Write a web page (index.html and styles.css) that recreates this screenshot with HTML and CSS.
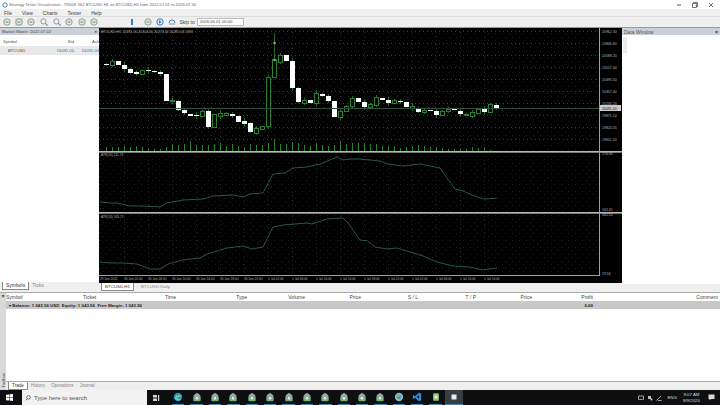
FILE: index.html
```html
<!DOCTYPE html>
<html lang="en">
<head>
    <meta charset="UTF-8">
    <meta name="viewport" content="width=device-width, initial-scale=1.0">
    <title>Strategy Tester Visualization</title>
    <link rel="stylesheet" href="styles.css">
</head>
<body>
    <svg class="defs" width="0" height="0">
        <symbol id="tool" viewBox="0 0 8 8">
            <circle cx="4" cy="4" r="3.2" fill="#e4e8e4" stroke="#7f9a86" stroke-width="0.9"/>
            <path d="M2.5 4h3" stroke="#5d7f68" stroke-width="0.9"/>
        </symbol>
        <symbol id="zoom" viewBox="0 0 8 8">
            <circle cx="3.4" cy="3.4" r="2.6" fill="#eef1f4" stroke="#8090a0" stroke-width="0.9"/>
            <path d="M5.3 5.3L7.6 7.6" stroke="#7a8a9a" stroke-width="1.1"/>
        </symbol>
        <symbol id="app" viewBox="0 0 12 12">
            <path d="M6 1l4 3v2H2V4z" fill="#9aa7a3"/>
            <path d="M1.5 6h9v3.5a1.5 1.5 0 0 1-1.5 1.5H3a1.5 1.5 0 0 1-1.5-1.5z" fill="#6fb07c"/>
            <circle cx="6" cy="7.5" r="1.6" fill="#e8f0ea"/>
        </symbol>
        <symbol id="edge" viewBox="0 0 12 12">
            <circle cx="6" cy="6" r="5" fill="#2b8fc4"/>
            <path d="M2 7c1-4 7-5 8-1H5c0 2 3 3 5 2-1 3-7 3-8-1z" fill="#6fd0a0"/>
        </symbol>
        <symbol id="globe" viewBox="0 0 12 12">
            <circle cx="6" cy="6" r="5" fill="#8fb4c8"/>
            <circle cx="6" cy="6" r="2.4" fill="#3f86b8"/>
            <path d="M3 2.5l5 1-2 3-4-1z" fill="#7fb07a"/>
        </symbol>
        <symbol id="code" viewBox="0 0 12 12">
            <path d="M8.5 1L11 2.2v7.6L8.5 11 3.5 6.9 1.6 8.4 1 8V4l.6-.4 1.9 1.5zM8.5 3.8L5.6 6l2.9 2.2z" fill="#2f8fe0"/>
        </symbol>
        <symbol id="leaf" viewBox="0 0 12 12">
            <rect x="2.5" y="1.5" width="7" height="9" rx="1" fill="#8fbf6f"/>
            <circle cx="6" cy="6" r="2" fill="#e6f0dc"/>
        </symbol>
        <symbol id="square" viewBox="0 0 12 12">
            <rect x="3" y="3" width="6" height="6" fill="#e4ecf4"/>
        </symbol>
    </svg>

    <div class="app">
        <div class="title-bar">
            <svg class="title-icon" width="6" height="6" viewBox="0 0 6 6"><circle cx="3" cy="3" r="2.2" fill="none" stroke="#3b7fc4" stroke-width="1"/></svg>
            <span class="title-text">Strategy Tester Visualization : TR008 V62 BTCUSD H1 on BTCUSD,H1 from 2022.07.01 to 2026.07.30</span>
            <div class="window-controls">
                <svg width="6" height="6" viewBox="0 0 6 6"><path d="M1 3h4" stroke="#555"/></svg>
                <svg width="6" height="6" viewBox="0 0 6 6"><path d="M.5 1.5h4v4h-4zM1.5 1.5v-1h4v4h-1" fill="none" stroke="#555" stroke-width=".8"/></svg>
                <svg width="6" height="6" viewBox="0 0 6 6"><path d="M1 1l4 4M5 1L1 5" stroke="#555" stroke-width=".8"/></svg>
            </div>
        </div>

        <div class="menu-bar">
            <span>File</span><span>View</span><span>Charts</span><span>Tester</span><span>Help</span>
        </div>

        <div class="toolbar">
            <div class="tool-group">
                <svg class="tool"><use href="#tool"/></svg>
                <svg class="tool tool-on"><use href="#tool"/></svg>
                <svg class="tool"><use href="#tool"/></svg>
            </div>
            <div class="tool-group tool-group-wide">
                <svg class="tool"><use href="#zoom"/></svg>
                <svg class="tool"><use href="#zoom"/></svg>
                <svg class="tool"><use href="#tool"/></svg>
                <svg class="tool"><use href="#tool"/></svg>
                <svg class="tool"><use href="#tool"/></svg>
            </div>
            <span class="speed-mark"></span>
            <div class="tool-group tool-group-play">
                <svg class="tool"><use href="#tool"/></svg>
                <svg class="tool tool-blue" viewBox="0 0 8 8"><circle cx="4" cy="4" r="3.2" fill="#dce8f6" stroke="#2f7dc8"/><path d="M3 2.2L5.6 4 3 5.8z" fill="#2f7dc8"/></svg>
                <svg class="tool" viewBox="0 0 8 8"><path d="M1 5a3 3 0 0 1 6 0" fill="none" stroke="#4a80b0"/><path d="M1 6h6" stroke="#8a9aa8"/></svg>
            </div>
            <span class="skip-label">Skip to</span>
            <span class="date-box">2026.05.01 00:00</span>
        </div>

        <div class="workspace">
            <div class="side-col">
                <div class="panel">
                    <div class="panel-head market-head"><span>Market Watch: 2022.07.02</span><span class="panel-close">×</span></div>
                    <div class="watch-row watch-head">
                        <span>Symbol</span><span class="num">Bid</span><span class="num">Ask</span>
                    </div>
                    <div class="watch-row watch-item">
                        <span class="sym">BTCUSD</span><span class="num">15031.00</span><span class="num">15031.00</span>
                    </div>
                </div>
                <div class="tabs side-tabs">
                    <span class="tab active">Symbols</span><span class="tab">Ticks</span>
                </div>
            </div>

            <div class="chart-col">
                <svg id="chart" class="chart" width="523" height="255" viewBox="99 28 523 255">
                    <defs>
                        <pattern id="dither" width="7" height="7" patternUnits="userSpaceOnUse">
                            <rect x="1" y="2" width="1" height="1" fill="#16221a"/>
                            <rect x="5" y="5" width="1" height="1" fill="#1c1c1c"/>
                        </pattern>
                    </defs>
                    <rect x="99" y="28" width="523" height="255" fill="#000"/>
                    <rect x="99" y="28" width="500" height="247" fill="url(#dither)"/>
                </svg>
                <div class="tabs chart-tabs">
                    <span class="tab active">BTCUSD,H1</span><span class="tab">BTCUSD,Daily</span>
                </div>
            </div>

            <div class="side-col data-col">
                <div class="panel">
                    <div class="panel-head"><span>Data Window</span><span class="panel-close">×</span></div>
                    <div class="data-grip"></div>
                </div>
                <div class="data-strip"></div>
            </div>
        </div>

        <div class="toolbox">
            <div class="toolbox-strip">
                <span class="strip-close">×</span>
                <span class="strip-label">Toolbox</span>
            </div>
            <div class="toolbox-main">
                <div class="trade-grid trade-head">
                    <span>Symbol</span><span>Ticket</span>
                    <span class="num">Time</span><span class="num">Type</span><span class="num">Volume</span>
                    <span class="num">Price</span><span class="num">S / L</span><span class="num">T / P</span>
                    <span class="num">Price</span><span class="num">Profit</span><span class="num">Comment</span>
                </div>
                <div class="trade-grid trade-balance">
                    <span class="balance-text">▾ Balance: 1 043.56 USD&nbsp; Equity: 1 043.56&nbsp; Free Margin: 1 043.56</span>
                    <span class="num">0.00</span>
                </div>
                <div class="trade-empty"></div>
                <div class="tabs toolbox-tabs">
                    <span class="tab active">Trade</span><span class="tab">History</span><span class="tab">Operations</span><span class="tab">Journal</span>
                </div>
            </div>
        </div>

        <div class="taskbar">
            <svg class="start" width="7" height="7" viewBox="0 0 7 7"><path d="M0 .8L3 .4v2.8H0zM3.5.3L7 0v3.2H3.5zM0 3.8h3v2.8L0 6.2zM3.5 3.8H7V7l-3.5-.4z" fill="#fff"/></svg>
            <div class="search-box">
                <svg width="6" height="6" viewBox="0 0 6 6"><circle cx="3.6" cy="2.4" r="1.8" fill="none" stroke="#444" stroke-width=".7"/><path d="M2.3 3.7L.6 5.4" stroke="#444" stroke-width=".7"/></svg>
                <span>Type here to search</span>
            </div>
            <svg class="task-view" width="7" height="6" viewBox="0 0 7 6"><path d="M0 0h4v2.4H0zM0 3.4h4V6H0zM5 0h1.2v6H5z" fill="#d8d8d8"/></svg>
            <div id="task-icons" class="task-icons"></div>
            <div class="tray">
                <svg width="6" height="6" viewBox="0 0 6 6"><path d="M.5 1h5v3.4h-5z" fill="none" stroke="#ddd" stroke-width=".7"/></svg>
                <svg width="6" height="6" viewBox="0 0 6 6"><path d="M1 1h3v3H1z" fill="#bbb"/><circle cx="4.5" cy="4.5" r="1" fill="#ddd"/></svg>
                <svg width="6" height="6" viewBox="0 0 6 6"><path d="M.5 5.5L5 1M2 5.5h3.5" stroke="#ccc" stroke-width=".8"/></svg>
                <span class="lang">ENG</span>
                <span class="clock"><span>9:07 AM</span><span>8/9/2020</span></span>
                <svg class="notes" width="7" height="7" viewBox="0 0 7 7"><path d="M.5.5h6v4.5H3L1.5 6.5V5h-1z" fill="#d8d8d8"/></svg>
            </div>
        </div>
    </div>

    <script src="chart.js"></script>
</body>
</html>
```

FILE: styles.css
```css
:root {
    --panel: #efefef;
    --line: #b9b9b9;
    --text: #444;
    --head: #c9d0da;
    --taskbar: #0d0f10;
}

* {
    box-sizing: border-box;
}

body {
    margin: 0;
    background: #fff;
    font-family: 'Liberation Sans', Arial, sans-serif;
    font-size: 5px;
    color: var(--text);
    overflow: hidden;
}

.defs {
    display: block;
    height: 0;
}

.app {
    width: 720px;
    height: 405px;
    display: flex;
    flex-direction: column;
}

.num {
    text-align: right;
}

/* window chrome */
.title-bar {
    height: 9px;
    display: flex;
    align-items: center;
    gap: 1px;
    padding-left: 2px;
    background: #fff;
    color: #666;
    font-size: 4.1px;
}

.window-controls {
    margin-left: auto;
    display: flex;
    gap: 10px;
    padding-right: 6px;
}

.menu-bar {
    height: 8px;
    display: flex;
    align-items: center;
    gap: 10px;
    padding-left: 4px;
    background: #f0f0f0;
    border-bottom: 1px solid #dcdcdc;
}

.toolbar {
    height: 11px;
    display: flex;
    align-items: center;
    padding-left: 3px;
    background: var(--panel);
    border-bottom: 1px solid #9a9a9a;
}

.tool-group {
    display: flex;
    gap: 4px;
}

.tool-group-wide {
    gap: 4.6px;
    margin-left: 5px;
}

.tool-group-play {
    margin-left: 11px;
}

.tool {
    width: 8px;
    height: 8px;
}

.tool-on {
    background: #d5dde5;
}

.speed-mark {
    width: 2px;
    height: 6px;
    margin-left: 33px;
    background: #2f7dc8;
}

.skip-label {
    margin-left: 3px;
}

.date-box {
    width: 47px;
    height: 8px;
    margin-left: 2px;
    padding-left: 2px;
    font-size: 4.2px;
    line-height: 6px;
    background: #fff;
    border: 1px solid #bbb;
}

/* main area */
.workspace {
    height: 264px;
    display: grid;
    grid-template-columns: 99px 523px 98px;
}

.side-col {
    display: flex;
    flex-direction: column;
    background: var(--panel);
}

.panel {
    flex: 1;
    background: #fff;
}

.panel-head {
    height: 7px;
    display: flex;
    justify-content: space-between;
    align-items: center;
    padding: 0 2px;
    background: var(--head);
}

.market-head {
    font-size: 4.2px;
}

.panel-close {
    font-weight: bold;
    color: #222;
}

.watch-row {
    height: 9px;
    display: grid;
    grid-template-columns: 50px 21px 25px;
    align-items: center;
    padding-left: 3px;
    font-size: 4.2px;
}

.watch-head {
    margin-top: 1px;
    height: 10px;
    color: #555;
}

.watch-item {
    background: #e9e9e9;
}

.watch-item .num {
    color: #2b6fc2;
}

.sym {
    padding-left: 5px;
}

.tabs {
    display: flex;
    align-items: flex-start;
    color: #888;
}

.tab {
    height: 8px;
    padding: 0 3px;
    line-height: 7px;
}

.tab.active {
    background: #fff;
    color: #333;
    border: 1px solid #888;
    border-top: none;
}

.side-tabs {
    height: 10px;
    padding-left: 2px;
}

.chart-col {
    display: flex;
    flex-direction: column;
    background: var(--panel);
}

.chart {
    display: block;
}

.chart-tabs {
    height: 9px;
    padding-left: 2px;
    gap: 4px;
    font-size: 4.4px;
}

.chart-text {
    font-family: 'Liberation Sans', Arial, sans-serif;
    font-size: 3.5px;
    fill: #b4b4b4;
}

.chart-time {
    font-size: 3.2px;
}

.data-col .panel-head span:first-child {
    color: #555;
}

.data-grip {
    width: 4px;
    height: 16px;
    margin: 2px 0 0 1px;
    background: #ececec;
}

.data-strip {
    height: 8px;
}

/* bottom toolbox */
.toolbox {
    flex: 1;
    display: flex;
    border-top: 1px solid #aaa;
}

.toolbox-strip {
    width: 6px;
    display: flex;
    flex-direction: column;
    justify-content: space-between;
    align-items: center;
    background: #d9d9d9;
}

.strip-close {
    font-weight: bold;
    color: #222;
}

.strip-label {
    writing-mode: vertical-rl;
    transform: rotate(180deg);
    padding-top: 3px;
    font-size: 4.2px;
}

.toolbox-main {
    flex: 1;
    display: flex;
    flex-direction: column;
}

.trade-grid {
    display: grid;
    grid-template-columns: 77px 40px 53px 71px 58px 56px 57px 58px 56px 61px 125px;
    align-items: center;
}

.trade-head {
    height: 8px;
    padding-left: 3px;
    margin-left: -3px;
}

.trade-balance {
    height: 8px;
    background: #c8c8c8;
    color: #222;
    font-weight: bold;
    font-size: 4.4px;
}

.balance-text {
    grid-column: 1 / span 9;
    padding-left: 3px;
}

.trade-empty {
    flex: 1;
    background: #fff;
}

.toolbox-tabs {
    height: 9px;
    background: var(--panel);
    border-top: 1px solid #aaa;
    padding-left: 2px;
    font-size: 4.6px;
}

/* windows taskbar */
.taskbar {
    height: 15px;
    display: flex;
    align-items: center;
    background: var(--taskbar);
    color: #d8d8d8;
}

.start {
    margin: 0 6px 0 6px;
}

.search-box {
    width: 125px;
    height: 15px;
    margin-left: 3px;
    display: flex;
    align-items: center;
    gap: 3px;
    padding-left: 3px;
    background: #f2f2f2;
    color: #555;
    font-size: 6px;
}

.task-view {
    margin-left: 6px;
}

.task-icons {
    height: 15px;
    display: flex;
    margin-left: 9px;
}

.task-icon {
    width: 12.4px;
    height: 15px;
    margin: 0 3px;
    display: flex;
    justify-content: center;
    align-items: center;
    border-bottom: 1px solid #3a8ac8;
}

.task-icon.current {
    width: 18.4px;
    margin: 0;
    background: #3a3d40;
}

.tray {
    margin-left: auto;
    display: flex;
    align-items: center;
    gap: 3px;
    padding-right: 5px;
}

.lang {
    margin-left: 2px;
    font-size: 4.4px;
}

.clock {
    display: flex;
    flex-direction: column;
    align-items: center;
    line-height: 6px;
    margin: 0 5px 0 3px;
    font-size: 4.4px;
}
```

FILE: chart.js
```js
const SVG_NS = 'http://www.w3.org/2000/svg';
const chart = document.getElementById('chart');

// top, bottom of each body and h = hollow (rising), w = solid white (falling)
const candles = [
    [64,65,'w'],[61,65,'h'],[61,65,'w'],[65,69,'w'],[69,73,'w'],[72,74,'w'],[70,74,'h'],[70,71,'w'],
    [71,72,'w'],[72,74,'w'],[74,101,'w'],[100,101,'h'],[101,110,'w'],[110,113,'w'],[114,116,'w'],[115,116,'w'],
    [111,116,'h'],[111,127,'w'],[114,127,'h'],[113,116,'h'],[113,115,'h'],[114,116,'w'],[116,122,'w'],[121,124,'w'],
    [123,132,'w'],[128,133,'h'],[126,129,'h'],[77,126,'h'],[59,77,'h'],[55,62,'h'],[55,61,'w'],[61,88,'w'],
    [88,102,'w'],[100,103,'h'],[100,103,'w'],[93,103,'h'],[94,96,'w'],[96,101,'w'],[101,117,'w'],[111,117,'h'],
    [106,111,'h'],[98,106,'h'],[98,102,'w'],[102,107,'w'],[104,107,'h'],[97,105,'h'],[98,100,'w'],[100,103,'w'],
    [100,103,'h'],[101,102,'w'],[102,107,'w'],[106,108,'h'],[108,112,'w'],[110,112,'h'],[110,111,'w'],[111,115,'w'],
    [111,115,'h'],[109,111,'h'],[109,110,'w'],[111,114,'w'],[114,115,'h'],[112,116,'h'],[109,113,'h'],[109,112,'w'],
    [104,112,'h'],[105,108,'w']
];
const volumes = [4,4,4,5,4,5,4,3,2,2,4,7,6,7,10,6,6,6,7,8,5,7,5,4,7,6,6,8,12,7,7,9,8,6,5,8,6,5,6,10,7,8,8,
    8,7,7,5,5,5,3,4,5,6,5,4,4,3,2,2,2,2,4,3,4,1,0];

const priceLabels = [[31,'20962.30'],[43,'20846.80'],[55,'20588.20'],[67,'20527.44'],[79,'20495.50'],[91,'20357.40'],
    [103,'20230.20'],[115,'19875.10'],[127,'19824.05'],[139,'19651.50']];
const timeLabels = ['29 Jun 2022','30 Jun 02:00','30 Jun 06:00','30 Jun 10:00','30 Jun 14:00','30 Jun 18:00','30 Jun 22:00',
    '1 Jul 02:00','1 Jul 06:00','1 Jul 10:00','1 Jul 14:00','1 Jul 18:00','1 Jul 22:00','1 Jul 02:00','1 Jul 06:00','1 Jul 10:00','1 Jul 14:00'];

const atrFast = '100,202 110,203 117,203 130,206 143,206 160,207 167,203 183,200 203,199 213,196 233,195 243,197 250,194 263,193 273,174 285,173 293,168 307,167 320,164 337,157 343,160 350,159 360,159 380,161 388,164 403,166 420,164 440,168 447,178 455,189 463,191 477,197 485,199 497,198';
const atrSlow = '100,262 110,263 123,263 137,264 150,269 160,269 168,264 183,260 200,258 207,254 227,248 243,246 252,249 263,247 273,227 283,225 307,223 312,224 327,219 343,218 348,223 360,240 368,241 375,247 387,249 397,248 410,252 423,256 437,262 453,266 470,267 483,270 497,268';

function add(tag, attrs, text) {
    const el = document.createElementNS(SVG_NS, tag);
    for (const key in attrs) el.setAttribute(key, attrs[key]);
    if (text) el.textContent = text;
    chart.appendChild(el);
    return el;
}

function hLine(y, x1, x2, stroke, dash) {
    add('line', { x1: x1, x2: x2, y1: y, y2: y, stroke: stroke, 'stroke-dasharray': dash || 'none' });
}

// grid
priceLabels.forEach(function (p) {
    hLine(p[0] + 0.5, 99, 599, '#3a3a3a', '1 3');
    add('text', { class: 'chart-text', x: 602, y: p[0] + 2 }, p[1]);
});
timeLabels.forEach(function (label, i) {
    const x = 100 + i * 24;
    add('line', { x1: x + 0.5, x2: x + 0.5, y1: 28, y2: 275, stroke: '#222', 'stroke-dasharray': '1 3' });
    add('text', { class: 'chart-text chart-time', x: x, y: 280 }, label);
});

// candles and volume
candles.forEach(function (c, i) {
    const x = 106 + i * 6;
    const wick = [1, 2, 0, 3][i % 4];
    add('line', { x1: x + 0.5, x2: x + 0.5, y1: c[0] - wick, y2: c[1] + wick, stroke: '#1f6a26' });
    if (c[2] === 'w') {
        add('rect', { x: x - 2, y: c[0], width: 5, height: Math.max(c[1] - c[0], 1), fill: '#fff' });
    } else {
        add('rect', { x: x - 1.5, y: c[0] + 0.5, width: 4, height: c[1] - c[0], fill: '#000', stroke: '#2a7f30' });
    }
    add('line', { x1: x + 0.5, x2: x + 0.5, y1: 151 - volumes[i], y2: 151, stroke: '#2a8030' });
});

// spike and trade marks
add('line', { x1: 274.5, x2: 274.5, y1: 33, y2: 59, stroke: '#1f6a26' });
add('circle', { cx: 274.5, cy: 43, r: 1.3, fill: '#9a9a9a' });
add('circle', { cx: 274.5, cy: 60, r: 1.3, fill: '#6f9fc0' });

// current price
hLine(108.5, 99, 599, '#2f4f42');
add('rect', { x: 600, y: 105, width: 21, height: 6, fill: '#c8c8c8' });
add('text', { class: 'chart-text', x: 602, y: 109.5, style: 'fill:#111' }, '20031.00');

// indicator panes
hLine(151.5, 99, 622, '#b8b8b8');
hLine(152.5, 99, 622, '#777');
hLine(212.5, 99, 622, '#b8b8b8');
hLine(213.5, 99, 622, '#777');
hLine(275.5, 99, 600, '#a0a0a0');
add('line', { x1: 599.5, x2: 599.5, y1: 28, y2: 276, stroke: '#a0a0a0' });
add('polyline', { points: atrFast, fill: 'none', stroke: '#3d7a64', 'stroke-width': 0.7 });
add('polyline', { points: atrSlow, fill: 'none', stroke: '#3d7a64', 'stroke-width': 0.7 });

add('text', { class: 'chart-text', x: 101, y: 33 }, 'BTCUSD,H1: 20281.00 20304.00 20274.60 20281.00 1363');
add('text', { class: 'chart-text chart-time', x: 101, y: 156 }, 'ATR(20) 211.73');
add('text', { class: 'chart-text chart-time', x: 101, y: 218 }, 'ATR(14) 165.71');
add('text', { class: 'chart-text', x: 602, y: 155 }, '276.46');
add('text', { class: 'chart-text', x: 602, y: 211 }, '162.41');
add('text', { class: 'chart-text', x: 602, y: 216 }, '465.50');
add('text', { class: 'chart-text', x: 602, y: 275 }, '19.56');

// taskbar icons
const taskIcons = document.getElementById('task-icons');
const iconNames = ['edge', 'app', 'app', 'app', 'app', 'app', 'app', 'app', 'app', 'app', 'app', 'app', 'globe', 'code', 'leaf', 'square'];
iconNames.forEach(function (name, i) {
    const icon = document.createElement('span');
    icon.className = i === 15 ? 'task-icon current' : 'task-icon';
    icon.innerHTML = '<svg width="10" height="10"><use href="#' + name + '"/></svg>';
    taskIcons.appendChild(icon);
});
```
